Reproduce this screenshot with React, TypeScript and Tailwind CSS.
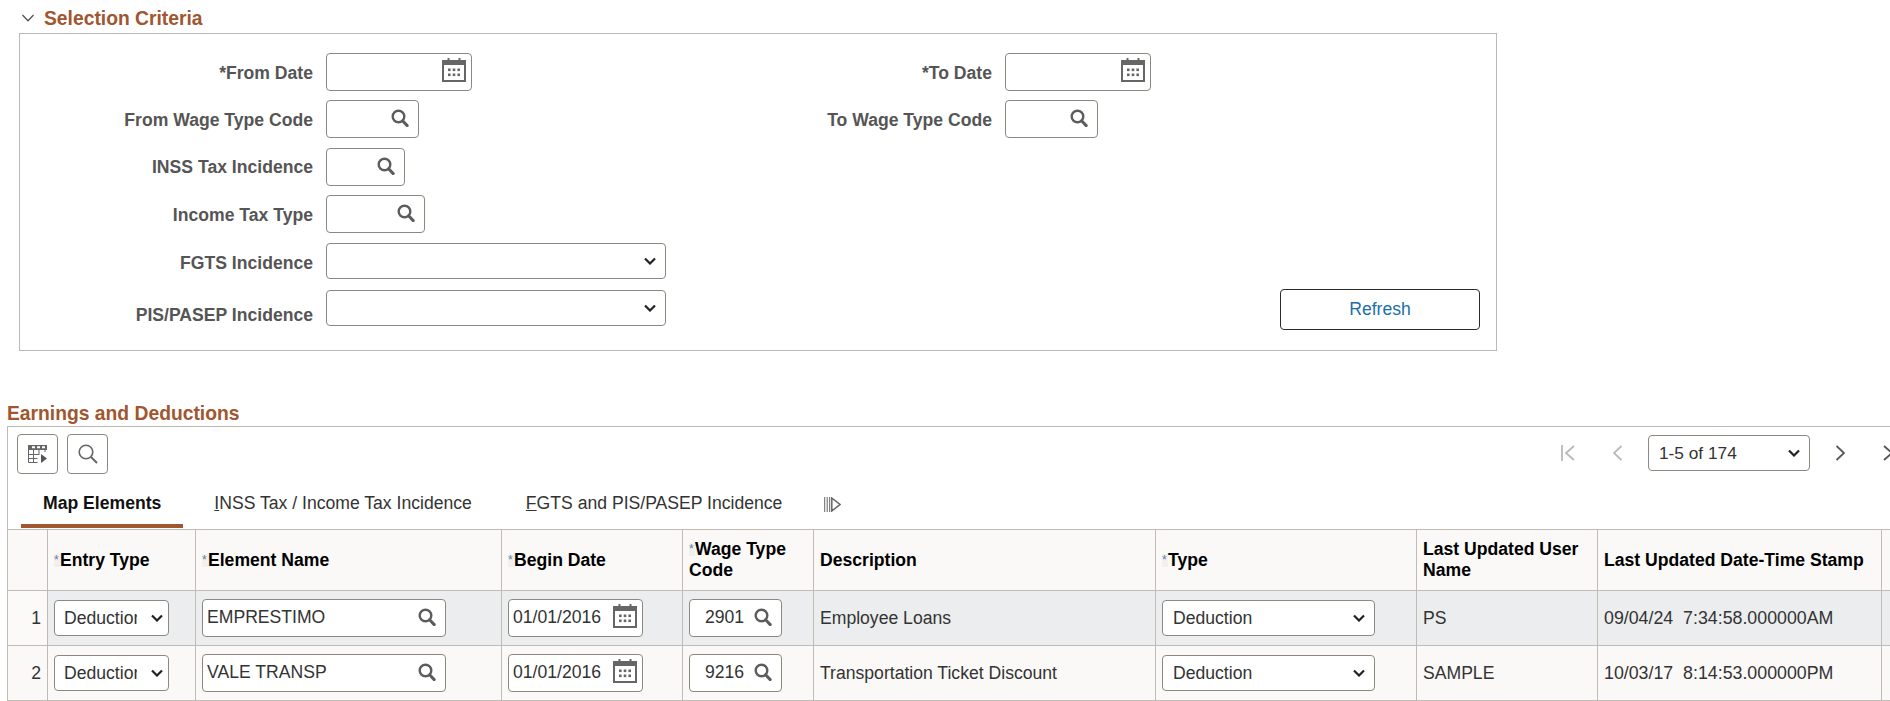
import type { ReactNode } from "react"

const SearchIcon = () => (
  <svg width="18" height="18" viewBox="0 0 18 18" fill="none" stroke="#5c5c5c" className="shrink-0 -mt-[2px]">
    <circle cx="7.5" cy="7.5" r="5.8" strokeWidth="2.4" />
    <path d="M11.6 11.8 16.2 16.6" strokeWidth="3" strokeLinecap="round" />
  </svg>
)

const CalendarIcon = () => (
  <svg width="24" height="24" viewBox="0 0 24 24" className="shrink-0 -mt-[4px]">
    <rect x="1" y="3" width="22" height="20" fill="none" stroke="#666" strokeWidth="2" />
    <rect x="1" y="3" width="22" height="4" fill="#666" />
    <path d="M6.5 0v5M17.5 0v5" stroke="#666" strokeWidth="2" />
    <g fill="#666">
      <rect x="6" y="10.5" width="2.6" height="2.6" />
      <rect x="10.7" y="10.5" width="2.6" height="2.6" />
      <rect x="15.4" y="10.5" width="2.6" height="2.6" />
      <rect x="6" y="15.5" width="2.6" height="2.6" />
      <rect x="10.7" y="15.5" width="2.6" height="2.6" />
      <rect x="15.4" y="15.5" width="2.6" height="2.6" />
    </g>
  </svg>
)

const SelectChevron = () => (
  <svg width="12" height="8" viewBox="0 0 12 8" fill="none" stroke="#222" strokeWidth="2.2" className="shrink-0">
    <path d="M1 1.5 6 6.5 11 1.5" />
  </svg>
)

const Field = ({ label, className, labelClass, children }: { label: string; className: string; labelClass: string; children: ReactNode }) => (
  <div className={`flex items-start ${className}`}>
    <div className={`text-right font-bold text-[#555] whitespace-nowrap ${labelClass}`}>{label}</div>
    {children}
  </div>
)

const Input = ({ className, children, value }: { className: string; children: ReactNode; value?: string }) => (
  <div className={`flex items-center h-[38px] shrink-0 bg-white border border-[#8c8880] rounded-[4px] text-[#333] ${className}`}>
    <span className="flex-1 whitespace-nowrap -mt-[2px]">{value}</span>
    {children}
  </div>
)

const Select = ({ className, children }: { className: string; children?: ReactNode }) => (
  <div className={`flex items-center justify-between bg-white border border-[#8c8880] rounded-[4px] text-[#333] ${className}`}>
    <span className="whitespace-nowrap overflow-hidden">{children}</span>
    <SelectChevron />
  </div>
)

const Req = () => (
  <span className="inline-block w-[6px] h-[13px] bg-[#f1f0ee] text-[12px] leading-[13px] font-normal text-[#5f7fa6] align-[2px]">*</span>
)

const rows = [
  { n: 1, element: "EMPRESTIMO", code: "2901", desc: "Employee Loans", user: "PS", stamp: "09/04/24\u00a0\u00a07:34:58.000000AM", bg: "bg-[#ecedef]", numBg: "bg-[#fbfaf9]" },
  { n: 2, element: "VALE TRANSP", code: "9216", desc: "Transportation Ticket Discount", user: "SAMPLE", stamp: "10/03/17\u00a0\u00a08:14:53.000000PM", bg: "bg-[#faf9f7]", numBg: "bg-[#faf9f7]" },
]

const cell = "border-r border-b border-[#c0bbb5] px-[6px] align-middle"

export default function App() {
  return (
    <div className="w-[1890px] h-[701px] overflow-hidden bg-white text-[17.6px] leading-[21px] font-['Liberation_Sans',Arial,sans-serif]">
      <div className="flex items-center h-[33px] pt-[3px] pl-[22px] gap-[10px]">
        <svg width="12" height="8" viewBox="0 0 12 8" fill="none" stroke="#555" strokeWidth="1.3">
          <path d="M.5 1 6 6.8 11.5 1" />
        </svg>
        <h2 className="text-[19.3px] font-bold text-[#a0562f]">Selection Criteria</h2>
      </div>

      <div className="ml-[19px] w-[1478px] h-[318px] border border-[#b9b9b9] flex pt-[19px] pb-[20px] pr-[16px]">
        <div className="w-[646px] flex flex-col">
          <Field label="*From Date" className="mb-[9px]" labelClass="w-[293px] mr-[13px] pt-[10px]">
            <Input className="w-[146px] pr-[5px]"><CalendarIcon /></Input>
          </Field>
          <Field label="From Wage Type Code" className="mb-[10px]" labelClass="w-[293px] mr-[13px] pt-[10px]">
            <Input className="w-[93px] pr-[9px]"><SearchIcon /></Input>
          </Field>
          <Field label="INSS Tax Incidence" className="mb-[9px]" labelClass="w-[293px] mr-[13px] pt-[9px]">
            <Input className="w-[79px] pr-[9px]"><SearchIcon /></Input>
          </Field>
          <Field label="Income Tax Type" className="mb-[10px]" labelClass="w-[293px] mr-[13px] pt-[10px]">
            <Input className="w-[99px] pr-[9px]"><SearchIcon /></Input>
          </Field>
          <Field label="FGTS Incidence" className="mb-[11px]" labelClass="w-[293px] mr-[13px] pt-[10px]">
            <Select className="w-[340px] h-[36px] pr-[9px]" />
          </Field>
          <Field label="PIS/PASEP Incidence" className="" labelClass="w-[293px] mr-[13px] pt-[15px]">
            <Select className="w-[340px] h-[36px] pr-[9px]" />
          </Field>
        </div>
        <div className="flex-1 flex flex-col">
          <Field label="*To Date" className="mb-[9px]" labelClass="w-[326px] mr-[13px] pt-[10px]">
            <Input className="w-[146px] pr-[5px]"><CalendarIcon /></Input>
          </Field>
          <Field label="To Wage Type Code" className="" labelClass="w-[326px] mr-[13px] pt-[10px]">
            <Input className="w-[93px] pr-[9px]"><SearchIcon /></Input>
          </Field>
          <button className="mt-auto self-end w-[200px] h-[41px] border border-[#2b2b2b] rounded-[4px] bg-white text-[#1b6fa8]">Refresh</button>
        </div>
      </div>

      <h2 className="mt-[50px] h-[25px] pl-[7px] text-[19.3px] leading-[25px] font-bold text-[#a0562f]">Earnings and Deductions</h2>

      <div className="ml-[7px] border-l border-t border-[#c0bbb5]">
        <div className="flex justify-between h-[47px] pt-[7px] pl-[9px] -mr-[7px]">
          <div className="flex gap-[9px]">
            <button className="w-[41px] h-[40px] flex items-center justify-center border border-[#8c8880] rounded-[4px]">
              <svg width="19" height="18" viewBox="0 0 19 18" fill="none">
                <rect x="0" y="0" width="19" height="5" fill="#666" />
                <path d="M4 2.2h3M9 2.2h3M14 2.2h3" stroke="#fff" strokeWidth="2" />
                <path d="M.5 5v12.5h9M.5 9.5h11M.5 13.5h9M5.5 5v12M11 5v4M17 5v2" stroke="#666" strokeWidth="1" />
                <path d="M13 9 19 13.5 13 18Z" fill="#555" />
              </svg>
            </button>
            <button className="w-[41px] h-[40px] flex items-center justify-center border border-[#8c8880] rounded-[4px]">
              <svg width="20" height="20" viewBox="0 0 20 20" fill="none" stroke="#666" strokeWidth="1.6">
                <circle cx="8" cy="8" r="6.8" />
                <path d="M13 13 19 19" strokeWidth="2" />
              </svg>
            </button>
          </div>
          <div className="flex items-center h-[38px]">
            <svg width="14" height="16" viewBox="0 0 14 16" fill="none" stroke="#b9b9b9" strokeWidth="1.8" className="mr-[38px]">
              <path d="M1 0v16M13 1 5 8l8 7" />
            </svg>
            <svg width="9" height="16" viewBox="0 0 9 16" fill="none" stroke="#b9b9b9" strokeWidth="1.8" className="mr-[26px]">
              <path d="M8.5 1 1 8l7.5 7" />
            </svg>
            <Select className="w-[162px] h-[36px] pl-[10px] pr-[9px] text-[17.28px]">1-5 of 174</Select>
            <svg width="9" height="16" viewBox="0 0 9 16" fill="none" stroke="#555" strokeWidth="1.8" className="ml-[26px]">
              <path d="M.5 1 8 8l-7.5 7" />
            </svg>
            <svg width="14" height="16" viewBox="0 0 14 16" fill="none" stroke="#555" strokeWidth="1.8" className="ml-[38px]">
              <path d="M1 1l8 7-8 7M13 0v16" />
            </svg>
          </div>
        </div>

        <div className="flex items-start h-[55px] pl-[13px] text-[#333]">
          <div className="h-[54px] pt-[8px] px-[22px] flex items-center border-b-4 border-[#a0562f] font-bold text-[#111]">Map Elements</div>
          <div className="h-[54px] pt-[8px] px-[23px] ml-[8px] flex items-center border-b-4 border-transparent"><span><span className="underline">I</span>NSS Tax / Income Tax Incidence</span></div>
          <div className="h-[54px] pt-[8px] px-[23px] ml-[8px] flex items-center border-b-4 border-transparent"><span><span className="underline">F</span>GTS and PIS/PASEP Incidence</span></div>
          <svg width="17" height="15" viewBox="0 0 17 15" fill="none" stroke="#666" className="ml-[19px] mt-[23px]">
            <path d="M.7 0v15M3.2 0v15M5.7 0v15" strokeWidth="1" />
            <path d="M7.8 1 16 7.5 7.8 14Z" strokeWidth="1.5" />
          </svg>
        </div>

        <table className="table-fixed w-[1883px] border-separate border-spacing-0 border-t border-[#c0bbb5] text-left">
          <colgroup>
            <col className="w-[40px]" />
            <col className="w-[148px]" />
            <col className="w-[306px]" />
            <col className="w-[181px]" />
            <col className="w-[131px]" />
            <col className="w-[342px]" />
            <col className="w-[261px]" />
            <col className="w-[181px]" />
            <col className="w-[284px]" />
            <col className="w-[9px]" />
          </colgroup>
          <thead>
            <tr className="h-[61px] bg-[#faf9f7] font-bold text-black">
              <th className={cell}></th>
              <th className={cell}><Req />Entry Type</th>
              <th className={cell}><Req />Element Name</th>
              <th className={cell}><Req />Begin Date</th>
              <th className={cell}><Req />Wage Type Code</th>
              <th className={cell}>Description</th>
              <th className={cell}><Req />Type</th>
              <th className={cell}>Last Updated User Name</th>
              <th className={cell}>Last Updated Date-Time Stamp</th>
              <th className="border-b border-[#c0bbb5]"></th>
            </tr>
          </thead>
          <tbody className="text-[#333]">
            {rows.map((r) => (
              <tr key={r.n} className={`h-[55px] ${r.bg}`}>
                <td className={`${cell} text-right ${r.numBg}`}>{r.n}</td>
                <td className={cell}>
                  <Select className="w-[115px] h-[36px] pl-[9px] pr-[5px]"><span className="block w-[73px] overflow-hidden">Deduction</span></Select>
                </td>
                <td className={cell}>
                  <Input className="w-[244px] pl-[4px] pr-[9px]" value={r.element}><SearchIcon /></Input>
                </td>
                <td className={cell}>
                  <Input className="w-[135px] pl-[4px] pr-[5px]" value="01/01/2016"><CalendarIcon /></Input>
                </td>
                <td className={cell}>
                  <Input className="w-[93px] pl-[15px] pr-[9px]" value={r.code}><SearchIcon /></Input>
                </td>
                <td className={cell}>{r.desc}</td>
                <td className={cell}>
                  <Select className="w-[213px] h-[36px] pl-[10px] pr-[9px]">Deduction</Select>
                </td>
                <td className={cell}>{r.user}</td>
                <td className={`${cell} text-[17.8px]`}>{r.stamp}</td>
                <td className="border-b border-[#c0bbb5]"></td>
              </tr>
            ))}
          </tbody>
        </table>
      </div>
    </div>
  )
}
